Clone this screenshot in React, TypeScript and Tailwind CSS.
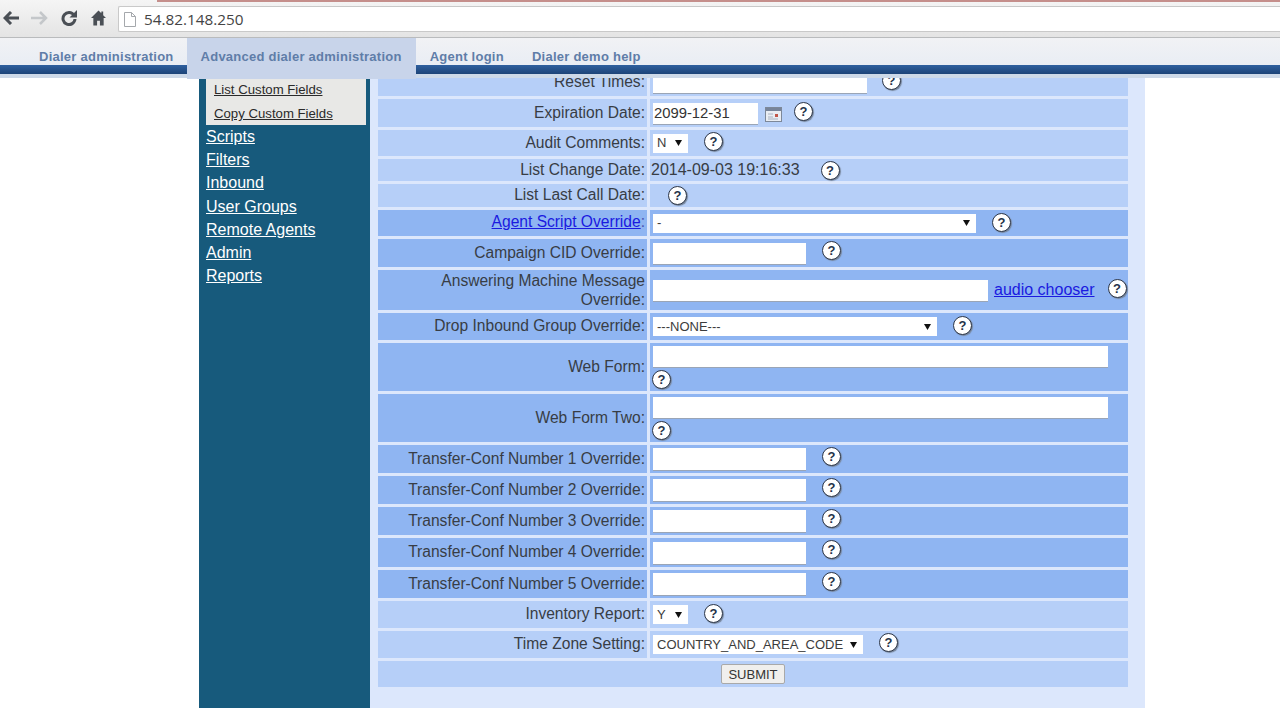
import { ReactNode } from "react";

const font = { fontFamily: '"Liberation Sans", Arial, sans-serif' };

function Help({ className = "" }: { className?: string }) {
  return (
    <span
      className={`flex h-[19px] w-[19px] shrink-0 items-center justify-center rounded-full border-[1.5px] border-[#2c3648] bg-white text-[13px] font-bold leading-none text-[#26324a] shadow-[1px_1px_1px_#75849a] ${className}`}
    >
      ?
    </span>
  );
}

function Input({ w, h = "h-[21px]", value = "" }: { w: string; h?: string; value?: string }) {
  return (
    <input
      readOnly
      defaultValue={value}
      className={`${w} ${h} shrink-0 bg-white pl-[1px] text-[14.8px] text-[#333] shadow-[0_1px_0_#9aa5b6] outline-none`}
    />
  );
}

function Select({ w, value, h = "h-[19px]" }: { w: string; value: string; h?: string }) {
  return (
    <div className={`${w} ${h} flex shrink-0 items-center justify-between bg-white pl-[4px] pr-[6px] text-[13px] text-[#3c3c3c]`}>
      <span>{value}</span>
      <svg width="7" height="6" viewBox="0 0 7 6">
        <path d="M0 0h7L3.5 6z" fill="#111" />
      </svg>
    </div>
  );
}

function Row({
  h,
  dark,
  label,
  children,
}: {
  h: string;
  dark?: boolean;
  label: ReactNode;
  children?: ReactNode;
}) {
  const bg = dark ? "bg-[#8fb5f2]" : "bg-[#b6cff8]";
  return (
    <div className={`flex ${h} gap-[3px]`}>
      <div className={`flex w-[269px] shrink-0 items-center justify-end pb-[2px] pr-[2px] text-right text-[15.6px] leading-[19px] text-[#383d45] ${bg}`}>
        {label}
      </div>
      <div className={`flex min-w-0 flex-1 items-center pl-[3px] ${bg}`}>{children}</div>
    </div>
  );
}

function Back() {
  return (
    <svg width="16" height="14" viewBox="0 0 16 14">
      <path d="M8 1 2 7l6 6M2.5 7H16" fill="none" stroke="#4a4f55" strokeWidth="3" />
    </svg>
  );
}

function Forward() {
  return (
    <svg width="17" height="14" viewBox="0 0 17 14">
      <path d="M9 1l6 6-6 6M14.5 7H0" fill="none" stroke="#c4c7ca" strokeWidth="2.5" />
    </svg>
  );
}

function Reload() {
  return (
    <svg width="16" height="16" viewBox="0 0 16 16">
      <path d="M13 5.2A6 6 0 1 0 14 9" fill="none" stroke="#4a4f55" strokeWidth="3" />
      <path d="M16 0v7.5H8.5z" fill="#4a4f55" />
    </svg>
  );
}

function Home() {
  return (
    <svg width="15" height="16" viewBox="0 0 16 16">
      <path d="M8 0 0 8h2.5v8H6.5v-5h3v5h4V8H16l-3-3V1h-2v2z" fill="#4a4f55" />
    </svg>
  );
}

function PageIcon() {
  return (
    <svg width="12" height="15" viewBox="0 0 12 15">
      <path d="M.5.5h7l4 4v10H.5z" fill="#fff" stroke="#a5a8ac" />
      <path d="M7.5.5v4h4" fill="none" stroke="#a5a8ac" />
    </svg>
  );
}

function CalendarIcon() {
  return (
    <svg className="ml-[7px] mt-[3px] shrink-0" width="17" height="15" viewBox="0 0 17 15">
      <rect x="0.5" y="0.5" width="16" height="14" fill="#e9edf3" stroke="#7d8899" />
      <rect x="1" y="1" width="15" height="3" fill="#77849a" />
      <rect x="10" y="7" width="3" height="3" fill="#c2574a" />
      <path d="M3 7h5M3 10h5M3 12h10" stroke="#aab3c2" />
    </svg>
  );
}

const subLink = "text-[13.2px] leading-[24px] text-[#2a2a2a] underline";
const sideLink = "block text-[16px] leading-[23.2px] text-white underline";

const transfers = [1, 2, 3, 4, 5];

export default function App() {
  return (
    <div className="flex h-[708px] flex-col overflow-hidden bg-white" style={font}>
      {/* browser chrome */}
      <div className="relative z-20 flex h-[38px] shrink-0 items-start border-b border-[#b9bbbd] bg-gradient-to-b from-[#f5f5f5] to-[#e4e4e4]">
        <div className="absolute left-[157px] right-0 top-0 h-[2px] bg-[#c58f8c]" />
        <div className="flex h-full items-center pb-[1px] pl-[3px]">
          <Back />
          <span className="ml-[12px]"><Forward /></span>
          <span className="ml-[13px]"><Reload /></span>
          <span className="ml-[14px]"><Home /></span>
        </div>
        <div className="ml-[12px] mt-[6px] flex h-[26px] flex-1 items-center rounded-l-[2px] border border-r-0 border-[#c9c9c9] bg-white pl-[5px]">
          <PageIcon />
          <span className="ml-[8px] text-[15.3px] text-[#444]" style={{ fontFamily: '"Open Sans", sans-serif' }}>
            54.82.148.250
          </span>
        </div>
      </div>

      {/* dialer nav */}
      <div className="relative z-20 h-[40px] shrink-0 bg-[#cdd9e8]">
        <div className="flex h-[27px] bg-gradient-to-b from-[#f1f2f5] to-[#e9edf4] pl-[25px] text-[13px] font-bold tracking-[0.25px] text-[#5f7da8]">
          <span className="flex items-start pl-[14px] pr-[13px] pt-[9px]">Dialer administration</span>
          <span className="flex h-[41px] items-start bg-[#c8d4ea] px-[14px] pt-[9px]">Advanced dialer administration</span>
          <span className="flex items-start px-[14px] pt-[9px]">Agent login</span>
          <span className="flex items-start px-[14px] pt-[9px]">Dialer demo help</span>
        </div>
        <div className="h-[9px] bg-gradient-to-b from-[#2f609f] to-[#1d4478]" />
      </div>

      {/* page */}
      <div className="ml-[199px] flex min-h-0 w-[946px] flex-1 overflow-hidden">
        <aside className="w-[171px] shrink-0 bg-[#175a7c] pl-[7px]">
          <div className="flex h-[47px] w-[160px] flex-col bg-[#e8e8e6] pl-[8px]">
            <a className={subLink}>List Custom Fields</a>
            <a className={subLink}>Copy Custom Fields</a>
          </div>
          <a className={sideLink}>Scripts</a>
          <a className={sideLink}>Filters</a>
          <a className={sideLink}>Inbound</a>
          <a className={sideLink}>User Groups</a>
          <a className={sideLink}>Remote Agents</a>
          <a className={sideLink}>Admin</a>
          <a className={sideLink}>Reports</a>
        </aside>

        <main className="flex-1 overflow-hidden bg-[#dce7fc] pl-[8px] pr-[17px]">
          <div className="-mt-[10px] flex flex-col gap-[3px] text-[16px]">
            <Row h="h-[28px]" label="Reset Times:">
              <Input w="w-[214px]" />
              <Help className="mb-[4px] ml-[15px]" />
            </Row>
            <Row h="h-[28px]" label="Expiration Date:">
              <Input w="w-[105px]" value="2099-12-31" />
              <CalendarIcon />
              <Help className="mb-[4px] ml-[12px]" />
            </Row>
            <Row h="h-[26px]" label="Audit Comments:">
              <Select w="w-[35px]" value="N" />
              <Help className="mb-[3px] ml-[16px]" />
            </Row>
            <Row h="h-[22px]" label="List Change Date:">
              <span className="-ml-[2px] text-[#383d45]">2014-09-03 19:16:33</span>
              <Help className="ml-[21px]" />
            </Row>
            <Row h="h-[23px]" label="List Last Call Date:">
              <Help className="ml-[15px]" />
            </Row>
            <Row h="h-[26px]" dark label={<a className="mb-[1px]"><span className="text-[#1a1ae0] underline">Agent Script Override</span><span className="text-[#4a55b0]">:</span></a>}>
              <Select w="w-[323px]" value="-" />
              <Help className="mb-[2px] ml-[16px]" />
            </Row>
            <Row h="h-[28px]" dark label="Campaign CID Override:">
              <Input w="w-[153px]" />
              <Help className="mb-[5px] ml-[16px]" />
            </Row>
            <Row h="h-[40px]" dark label={<span className="mt-[2px] block w-[215px]">Answering Machine Message Override:</span>}>
              <Input w="w-[335px]" />
              <a className="ml-[6px] text-[#1a1ae0] underline">audio chooser</a>
              <Help className="mb-[3px] ml-[13px]" />
            </Row>
            <Row h="h-[27px]" dark label="Drop Inbound Group Override:">
              <Select w="w-[284px]" value="---NONE---" />
              <Help className="mb-[3px] ml-[16px]" />
            </Row>
            <Row h="h-[48px]" dark label="Web Form:">
              <div className="flex w-full flex-col">
                <Input w="w-[455px]" />
                <Help className="-ml-[1px] mt-[3px]" />
              </div>
            </Row>
            <Row h="h-[48px]" dark label="Web Form Two:">
              <div className="flex w-full flex-col">
                <Input w="w-[455px]" />
                <Help className="-ml-[1px] mt-[3px]" />
              </div>
            </Row>
            {transfers.map((n) => (
              <Row key={n} h={n === 4 ? "h-[29px]" : "h-[28px]"} dark label={`Transfer-Conf Number ${n} Override:`}>
                <Input w="w-[153px]" h="h-[22px]" />
                <Help className="mb-[6px] ml-[16px]" />
              </Row>
            ))}
            <Row h="h-[27px]" label="Inventory Report:">
              <Select w="w-[35px]" value="Y" />
              <Help className="mb-[3px] ml-[16px]" />
            </Row>
            <Row h="h-[27px]" label="Time Zone Setting:">
              <Select w="w-[210px]" value="COUNTRY_AND_AREA_CODE" />
              <Help className="mb-[4px] ml-[16px]" />
            </Row>
            <div className="flex h-[26px] items-center justify-center bg-[#b6cff8]">
              <button className="h-[20px] w-[64px] rounded-[2px] border border-[#a9a9a9] bg-[#f0efed] text-[13px] text-[#333]">
                SUBMIT
              </button>
            </div>
          </div>
        </main>
      </div>
    </div>
  );
}
